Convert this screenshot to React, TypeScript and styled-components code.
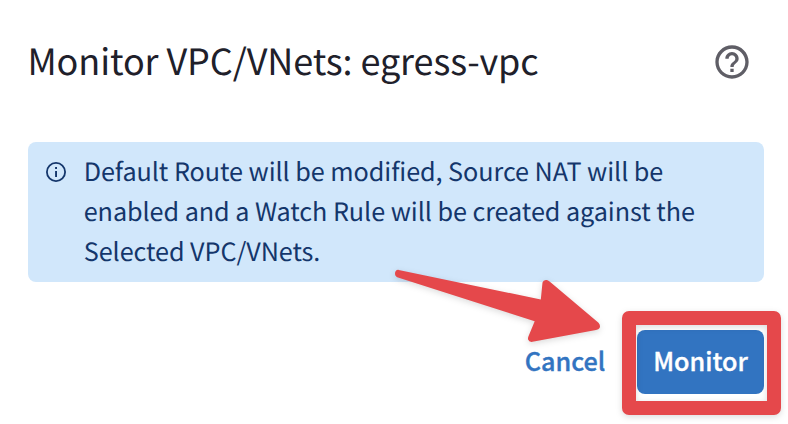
import React from "react";
import styled, { createGlobalStyle } from "styled-components";

const GlobalStyle = createGlobalStyle`
  *, *::before, *::after { box-sizing: border-box; }
  body {
    margin: 0;
    background: #ffffff;
    font-family: "Noto Sans CJK JP", "Noto Sans", sans-serif;
    text-rendering: geometricPrecision;
  }
`;

const Dialog = styled.section`
  position: relative;
  display: flex;
  flex-direction: column;
  width: 788px;
  height: 424px;
  padding: 32px 24px 30px 28px;
  overflow: hidden;
  background: #ffffff;
`;

const Header = styled.header`
  display: flex;
  align-items: center;
  justify-content: space-between;
  height: 60px;
  padding-right: 12px;
`;

const Title = styled.h1`
  align-self: flex-start;
  margin: 0 0 0 -0.6px;
  color: #20202a;
  font-size: 36px;
  font-weight: 400;
  line-height: 56px;
  letter-spacing: -0.09px;
  white-space: nowrap;
`;

const HelpButton = styled.button`
  display: flex;
  padding: 0;
  border: 0;
  background: none;
  color: #5f5e66;
`;

const Notice = styled.div`
  display: flex;
  gap: 15.7px;
  height: 140px;
  margin-top: 50px;
  padding: 9px 16px;
  border-radius: 8px;
  background: #d1e7fb;
  color: #14366b;
`;

const NoticeIcon = styled.svg`
  flex: none;
  width: 24px;
  height: 24px;
  margin-top: 9px;
`;

const NoticeText = styled.p`
  margin: 0;
  font-size: 25.2px;
  line-height: 40px;
  letter-spacing: -0.06px;
  white-space: nowrap;
`;

const Line = styled.span`
  display: block;
`;

const Actions = styled.footer`
  display: flex;
  justify-content: flex-end;
  gap: 16px;
  height: 64px;
  margin-top: 48px;
`;

const Button = styled.button<{ $primary?: boolean }>`
  display: block;
  height: 64px;
  width: ${({ $primary }) => ($primary ? 127 : 112)}px;
  padding: 0 0 4px;
  border: 0;
  border-radius: 8px;
  background: ${({ $primary }) => ($primary ? "#3274c1" : "transparent")};
  color: ${({ $primary }) => ($primary ? "#ffffff" : "#3274c1")};
  font-family: inherit;
  font-size: 25.2px;
  font-weight: 500;
  line-height: 60px;
  white-space: nowrap;
  -webkit-text-stroke: 0.35px currentColor;
`;

const Highlighted = styled.div`
  position: relative;
`;

const HighlightFrame = styled.div`
  position: absolute;
  inset: -19px -17px -21px -15px;
  border: 14px solid #e5484b;
  border-radius: 7px;
  filter: drop-shadow(0 2px 3px rgba(0, 0, 0, 0.14));
  pointer-events: none;
`;

const Arrow = styled.svg`
  position: absolute;
  left: 380px;
  top: 255px;
  width: 240px;
  height: 110px;
  overflow: visible;
  filter: drop-shadow(0 2px 3px rgba(0, 0, 0, 0.14));
  pointer-events: none;
`;

export default function App() {
  return (
    <>
      <GlobalStyle />
      <Dialog>
        <Header>
          <Title>Monitor VPC/VNets: egress-vpc</Title>
          <HelpButton aria-label="Help">
            <svg width="40" height="40" viewBox="0 0 24 24" fill="currentColor">
              <path d="M11 18h2v-2h-2v2zm1-16C6.48 2 2 6.48 2 12s4.48 10 10 10 10-4.48 10-10S17.52 2 12 2zm0 18c-4.41 0-8-3.59-8-8s3.59-8 8-8 8 3.59 8 8-3.59 8-8 8zm0-14c-2.21 0-4 1.79-4 4h2c0-1.1.9-2 2-2s2 .9 2 2c0 2-3 1.75-3 5h2c0-2.25 3-2.5 3-5 0-2.21-1.79-4-4-4z" />
            </svg>
          </HelpButton>
        </Header>
        <Notice role="status">
          <NoticeIcon viewBox="0 0 24 24">
            <circle cx="12" cy="12" r="9.1" fill="none" stroke="currentColor" strokeWidth="1.8" />
            <path d="M11.1 7h1.9v2h-1.9zM11.1 11h1.9v6h-1.9z" fill="currentColor" />
          </NoticeIcon>
          <NoticeText>
            <Line>Default Route will be modified, Source NAT will be</Line>
            <Line>enabled and a Watch Rule will be created against the</Line>
            <Line>Selected VPC/VNets.</Line>
          </NoticeText>
        </Notice>
        <Actions>
          <Button>Cancel</Button>
          <Highlighted>
            <Button $primary>Monitor</Button>
            <HighlightFrame />
          </Highlighted>
        </Actions>
        <Arrow viewBox="0 0 240 110">
          <path
            d="M18.7 14.9 L160.8 44.5 L162.5 27.5 Q163.5 24.3 167 25.1 Q169 25.8 170.5 27.3 L218.5 67.8 Q220.8 70.5 219.6 73 Q218.8 74.5 216 75 L152.5 86.8 Q149 87.3 148.1 84.5 Q147.7 83 148.6 81 L154.7 66.2 L17.2 22.2 C13.8 20.8 14.4 14.3 18.7 14.9 Z"
            fill="#e5484b"
          />
        </Arrow>
      </Dialog>
    </>
  );
}
